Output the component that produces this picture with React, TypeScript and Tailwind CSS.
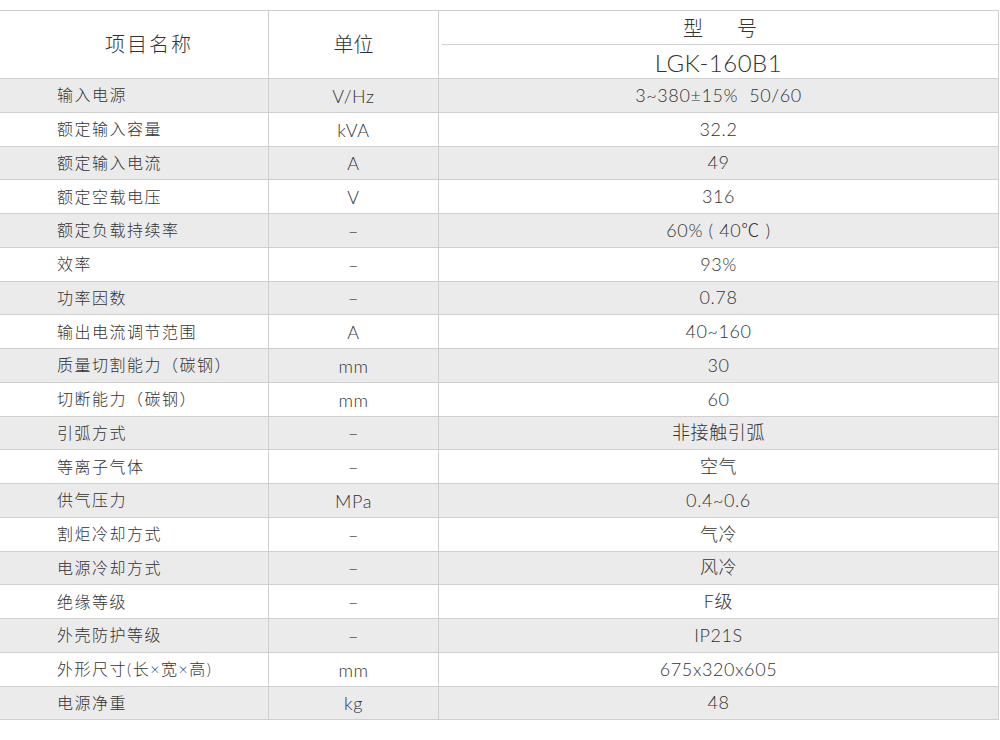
const rows: [string, string, string][] = [
  ['输入电源', 'V/Hz', '3~380±15%  50/60'],
  ['额定输入容量', 'kVA', '32.2'],
  ['额定输入电流', 'A', '49'],
  ['额定空载电压', 'V', '316'],
  ['额定负载持续率', '–', '60% ( 40℃ )'],
  ['效率', '–', '93%'],
  ['功率因数', '–', '0.78'],
  ['输出电流调节范围', 'A', '40~160'],
  ['质量切割能力（碳钢）', 'mm', '30'],
  ['切断能力（碳钢）', 'mm', '60'],
  ['引弧方式', '–', '非接触引弧'],
  ['等离子气体', '–', '空气'],
  ['供气压力', 'MPa', '0.4~0.6'],
  ['割炬冷却方式', '–', '气冷'],
  ['电源冷却方式', '–', '风冷'],
  ['绝缘等级', '–', 'F级'],
  ['外壳防护等级', '–', 'IP21S'],
  ['外形尺寸(长×宽×高)', 'mm', '675x320x605'],
  ['电源净重', 'kg', '48'],
];

const font = { fontFamily: 'Lato, "Noto Sans CJK SC", sans-serif' };

export default function App() {
  return (
    <div className="w-[1000px] h-[740px] bg-white pt-[10px] text-[#333]" style={font}>
      <div className="w-[999px] border-t border-r border-[#cfcfcf]">
        {/* Header */}
        <div className="grid grid-cols-[268px_170px_1fr] h-[68px] border-b border-[#cfcfcf]">
          <div className="flex items-center justify-center text-[20px] font-light tracking-[2px] pl-[30px] pb-1">项目名称</div>
          <div className="flex items-center justify-center text-[20px] font-light border-l border-[#cfcfcf] pb-1">单位</div>
          <div className="flex flex-col border-l border-[#cfcfcf]">
            <div className="h-[34px] flex items-center justify-center text-[20px] font-light border-b border-[#cfcfcf] ml-[3px]">
              型<span className="inline-block w-[34px]" />号
            </div>
            <div className="flex-1 flex items-center justify-center text-[24px] font-light tracking-[0.5px]">LGK-160B1</div>
          </div>
        </div>
        {/* Body */}
        {rows.map((r, i) => (
          <div
            key={i}
            className={`grid grid-cols-[268px_170px_1fr] h-[33.75px] border-b border-[#cfcfcf] ${i % 2 === 0 ? 'bg-[#ebebeb]' : 'bg-white'}`}
          >
            <div className="flex items-center pl-[57px] text-[16px] font-light tracking-[1.5px]">{r[0]}</div>
            <div className="flex items-center justify-center text-[18px] font-light tracking-[0.6px] border-l border-[#cfcfcf] pt-[2px]">{r[1]}</div>
            <div className="flex items-center justify-center text-[18px] font-light tracking-[0.6px] border-l border-[#cfcfcf] whitespace-pre">{r[2]}</div>
          </div>
        ))}
      </div>
    </div>
  );
}
